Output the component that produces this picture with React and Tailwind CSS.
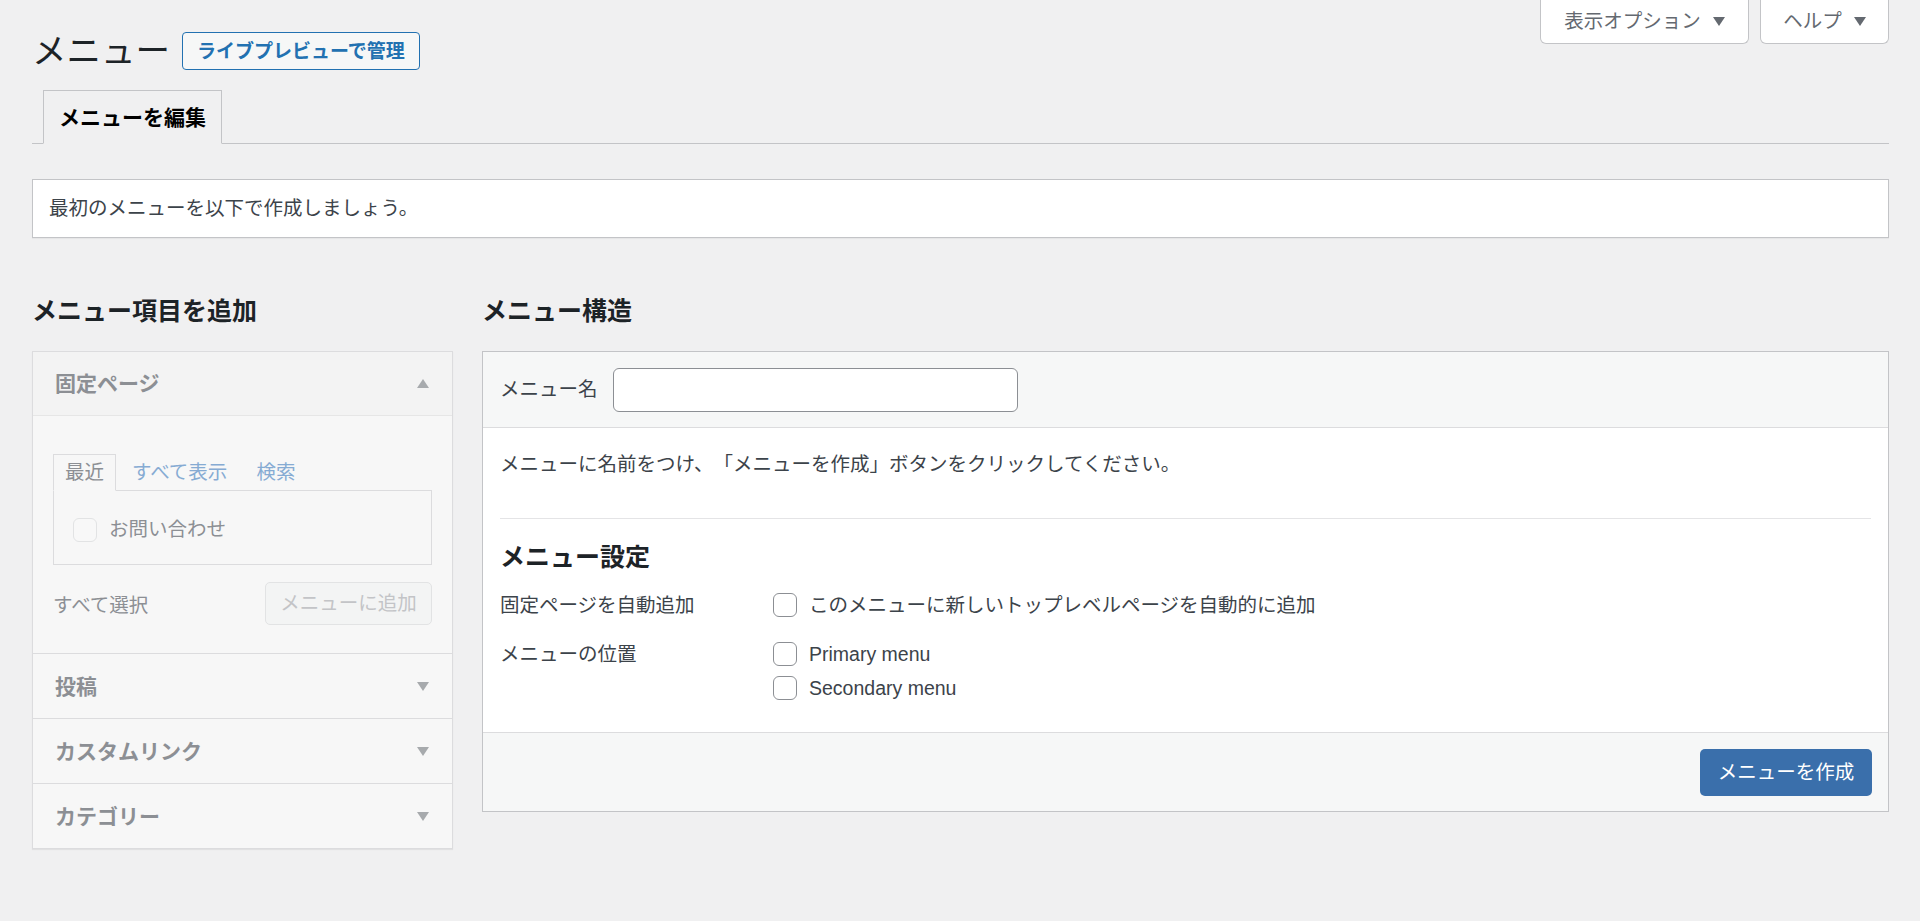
const font = { fontFamily: '"Liberation Sans", "Noto Sans CJK JP", sans-serif' };

function Caret({ up, className = "" }) {
  return (
    <svg width="12" height="9" viewBox="0 0 12 9" className={className}>
      {up ? <path d="M0 9 L6 0 L12 9 Z" fill="currentColor" /> : <path d="M0 0 L12 0 L6 9 Z" fill="currentColor" />}
    </svg>
  );
}

function Checkbox({ faded }) {
  return (
    <span
      className={
        "inline-block w-[24px] h-[24px] rounded-[6px] shrink-0 " +
        (faded ? "border border-[#e2e3e4] bg-[#f8f8f8]" : "border-[1.5px] border-[#8c8f94] bg-white")
      }
    />
  );
}

function SectionRow({ title }) {
  return (
    <div className="h-[65px] border-t border-[#dcdcde] flex items-center justify-between pl-[22px] pr-[23px]">
      <span className="text-[21px] font-bold text-[#8c8f94]">{title}</span>
      <Caret className="text-[#a7aaad]" />
    </div>
  );
}

export default function App() {
  return (
    <div
      className="min-h-[921px] bg-[#f0f0f1] text-[19.5px] text-[#3c434a] leading-[29px] [text-spacing-trim:space-all]"
      style={font}
    >
      <div className="pl-[32px] pr-[31px]">
        {/* top */}
        <div className="flex justify-between items-start">
          <div className="flex items-center gap-[12px] pt-[31px]">
            <h1 className="text-[34.5px] leading-[40px] text-[#1d2327]">メニュー</h1>
            <span className="h-[38px] px-[14px] flex items-center border-[1.5px] border-[#2271b1] rounded-[4px] bg-[#f6f7f7] text-[#2271b1] font-bold text-[19px]">
              ライブプレビューで管理
            </span>
          </div>
          <div className="flex gap-[11px]">
            <div className="w-[209px] h-[44px] bg-white border border-t-0 border-[#c3c4c7] rounded-b-[6px] flex items-center justify-center gap-[12px] text-[#646970]">
              表示オプション <Caret className="text-[#646970]" />
            </div>
            <div className="w-[129px] h-[44px] bg-white border border-t-0 border-[#c3c4c7] rounded-b-[6px] flex items-center justify-center gap-[12px] text-[#646970]">
              ヘルプ <Caret className="text-[#646970]" />
            </div>
          </div>
        </div>

        {/* tabs */}
        <div className="mt-[19px] border-b border-[#c3c4c7] pl-[11px] flex">
          <div className="w-[179px] h-[54px] -mb-px border border-[#c3c4c7] border-b-[#f0f0f1] bg-[#f0f0f1] flex items-center justify-center text-[21px] font-bold text-[#000]">
            メニューを編集
          </div>
        </div>

        {/* notice */}
        <div className="mt-[35px] h-[59px] bg-white border border-[#c3c4c7] flex items-center pl-[16px] shadow-[0_1px_1px_rgba(0,0,0,0.04)]">
          最初のメニューを以下で作成しましょう。
        </div>

        {/* columns */}
        <div className="mt-[57px] flex gap-[29px] items-start">
          {/* left */}
          <div className="w-[421px] shrink-0">
            <h2 className="text-[25px] leading-[32px] font-bold text-[#1d2327]">メニュー項目を追加</h2>
            <div className="mt-[24px] border border-[#dcdcde] bg-[#f7f7f7] shadow-[0_1px_1px_rgba(0,0,0,0.06)]">
              <div className="h-[64px] bg-[#f3f3f3] flex items-center justify-between pl-[22px] pr-[23px] border-b border-[#e6e6e6]">
                <span className="text-[21px] font-bold text-[#8c8f94]">固定ページ</span>
                <Caret up className="text-[#a7aaad]" />
              </div>
              <div className="px-[20px] pt-[38px] pb-[28px]">
                <div className="flex items-end h-[36px] text-[19.5px]">
                  <div className="h-[37px] -mb-px px-[11px] border border-[#dcdcde] border-b-[#f7f7f7] bg-[#f7f7f7] text-[#8c8f94] flex items-center relative z-10">
                    最近
                  </div>
                  <span className="ml-[16px] h-[36px] flex items-center text-[#86abd3]">すべて表示</span>
                  <span className="ml-[29px] h-[36px] flex items-center text-[#86abd3]">検索</span>
                </div>
                <div className="h-[75px] border border-[#dcdcde] flex items-center pl-[19px] pt-[4px] gap-[12px] text-[#8c8f94]">
                  <Checkbox faded />
                  <span>お問い合わせ</span>
                </div>
                <div className="mt-[17px] flex items-center justify-between">
                  <span className="text-[#8c8f94] pt-[3px]">すべて選択</span>
                  <span className="w-[167px] h-[43px] border border-[#e2e3e4] rounded-[5px] bg-[#f3f4f4] text-[#c3c4c7] flex items-center justify-center">
                    メニューに追加
                  </span>
                </div>
              </div>
              <SectionRow title="投稿" />
              <SectionRow title="カスタムリンク" />
              <SectionRow title="カテゴリー" />
            </div>
          </div>

          {/* right */}
          <div className="flex-1">
            <h2 className="text-[25px] leading-[32px] font-bold text-[#1d2327]">メニュー構造</h2>
            <div className="mt-[24px] border border-[#c3c4c7] bg-white">
              <div className="h-[76px] bg-[#f6f7f7] border-b border-[#dcdcde] flex items-center pl-[17px] gap-[15px]">
                <span>メニュー名</span>
                <span className="w-[405px] h-[44px] bg-white border-[1.5px] border-[#8c8f94] rounded-[6px]" />
              </div>
              <div className="px-[17px]">
                <p className="pt-[22px]">メニューに名前をつけ、「メニューを作成」ボタンをクリックしてください。</p>
                <div className="mt-[39px] border-t border-[#e4e4e6]" />
                <h3 className="mt-[23px] text-[25px] leading-[30px] font-bold text-[#1d2327]">メニュー設定</h3>
                <div className="mt-[21px] flex">
                  <div className="w-[273px] shrink-0 leading-[24px]">固定ページを自動追加</div>
                  <div className="flex items-center gap-[12px] leading-[24px]">
                    <Checkbox />
                    <span>このメニューに新しいトップレベルページを自動的に追加</span>
                  </div>
                </div>
                <div className="mt-[25px] flex pb-[32px]">
                  <div className="w-[273px] shrink-0 leading-[24px]">メニューの位置</div>
                  <div className="flex flex-col gap-[10px]">
                    <div className="flex items-center gap-[12px] leading-[24px]">
                      <Checkbox />
                      <span>Primary menu</span>
                    </div>
                    <div className="flex items-center gap-[12px] leading-[24px]">
                      <Checkbox />
                      <span>Secondary menu</span>
                    </div>
                  </div>
                </div>
              </div>
              <div className="h-[79px] bg-[#f6f7f7] border-t border-[#dcdcde] flex items-center justify-end pr-[16px]">
                <span className="w-[172px] h-[47px] rounded-[5px] bg-[#3a6fab] text-white flex items-center justify-center">
                  メニューを作成
                </span>
              </div>
            </div>
          </div>
        </div>
      </div>
    </div>
  );
}
